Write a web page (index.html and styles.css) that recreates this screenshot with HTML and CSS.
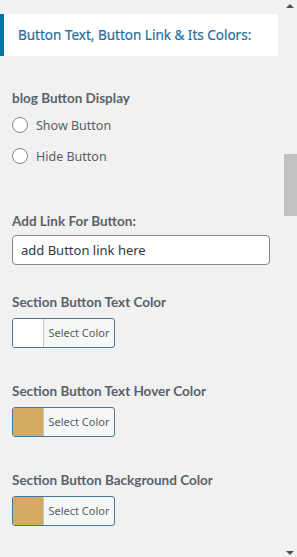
FILE: index.html
```html
<!DOCTYPE html>
<html lang="en">
<head>
    <meta charset="UTF-8">
    <meta name="viewport" content="width=device-width, initial-scale=1.0">
    <title>Button Settings</title>
    <link rel="stylesheet" href="styles.css">
</head>
<body>
    <div class="page">
        <div class="panel">
            <div class="section-title">Button Text, Button Link &amp; Its Colors:</div>

            <div class="control control-radio">
                <span class="control-label">blog Button Display</span>
                <label class="radio-row"><span class="radio"></span>Show Button</label>
                <label class="radio-row"><span class="radio"></span>Hide Button</label>
            </div>

            <div class="control control-link">
                <span class="control-label">Add Link For Button:</span>
                <input type="text" class="text-input" value="add Button link here">
            </div>

            <div class="control control-color">
                <span class="control-label">Section Button Text Color</span>
                <button class="color-result"><span class="swatch swatch-white"></span><span class="color-text">Select Color</span></button>
            </div>

            <div class="control control-color">
                <span class="control-label">Section Button Text Hover Color</span>
                <button class="color-result"><span class="swatch swatch-gold"></span><span class="color-text">Select Color</span></button>
            </div>

            <div class="control control-color">
                <span class="control-label">Section Button Background Color</span>
                <button class="color-result"><span class="swatch swatch-gold"></span><span class="color-text">Select Color</span></button>
            </div>
        </div>

        <div class="scrollbar">
            <span class="arrow arrow-up"></span>
            <span class="thumb"></span>
            <span class="arrow arrow-down"></span>
        </div>
    </div>
</body>
</html>
```
FILE: styles.css
```css
body {
    margin: 0;
    padding: 0;
    background-color: #f1f1f1;
    font-family: "Noto Sans", "Open Sans", sans-serif;
    color: #555d66;
    overflow: hidden;
}
.page {
    display: flex;
    height: 557px;
}
.panel {
    width: 283px;
    padding-top: 14px;
}
.section-title {
    background: white;
    border-left: 4px solid #0073aa;
    width: 278px;
    height: 42px;
    box-sizing: border-box;
    padding-left: 14px;
    font-size: 13.5px;
    line-height: 42px;
    color: #1f6e9c;
    -webkit-text-stroke: 0.2px #1f6e9c;
}
.control {
    padding-left: 12px;
}
.control-label {
    display: block;
    font-family: Lato, "Noto Sans", sans-serif;
    font-size: 13.5px;
    font-weight: 700;
    line-height: 20px;
    color: #5b6168;
}
.control-radio {
    margin-top: 32px;
}
.radio-row {
    display: flex;
    align-items: center;
    gap: 8px;
    font-size: 12.5px;
    height: 20px;
    margin-top: 7px;
}
.radio-row + .radio-row {
    margin-top: 11px;
}
.radio {
    width: 14px;
    height: 14px;
    border: 1px solid #7e8993;
    border-radius: 50%;
    background: white;
}
.control-link {
    margin-top: 45px;
}
.text-input {
    display: block;
    width: 258px;
    height: 30px;
    margin-top: 4px;
    box-sizing: border-box;
    border: 1px solid #7e8993;
    border-radius: 4px;
    padding: 0 8px;
    font-family: inherit;
    font-size: 13px;
    color: #32373c;
    background: white;
}
.control-color {
    margin-top: 27px;
}
.control-color + .control-color {
    margin-top: 33px;
}
.color-result {
    display: flex;
    margin-top: 6px;
    padding: 0;
    width: 103px;
    height: 30px;
    border: 1px solid #4b7595;
    border-radius: 3px;
    overflow: hidden;
    background: #f6f7f7;
    font-family: inherit;
}
.swatch {
    width: 30px;
    height: 100%;
    border-right: 1px solid #c3c4c7;
}
.swatch-white {
    background: white;
}
.swatch-gold {
    background: #d4a961;
}
.color-text {
    flex: 1;
    font-size: 11px;
    line-height: 28px;
    color: #555d66;
}
.scrollbar {
    width: 14px;
    display: flex;
    flex-direction: column;
    align-items: center;
    background: #f1f1f1;
}
.arrow {
    width: 0;
    height: 0;
    border-left: 4px solid transparent;
    border-right: 4px solid transparent;
}
.arrow-up {
    margin-top: 4px;
    border-bottom: 4px solid #505050;
}
.thumb {
    margin-top: 146px;
    width: 13px;
    margin-left: 1px;
    height: 62px;
    background: #c1c1c1;
}
.arrow-down {
    margin-top: auto;
    margin-bottom: 2px;
    border-top: 4px solid #505050;
}
```
